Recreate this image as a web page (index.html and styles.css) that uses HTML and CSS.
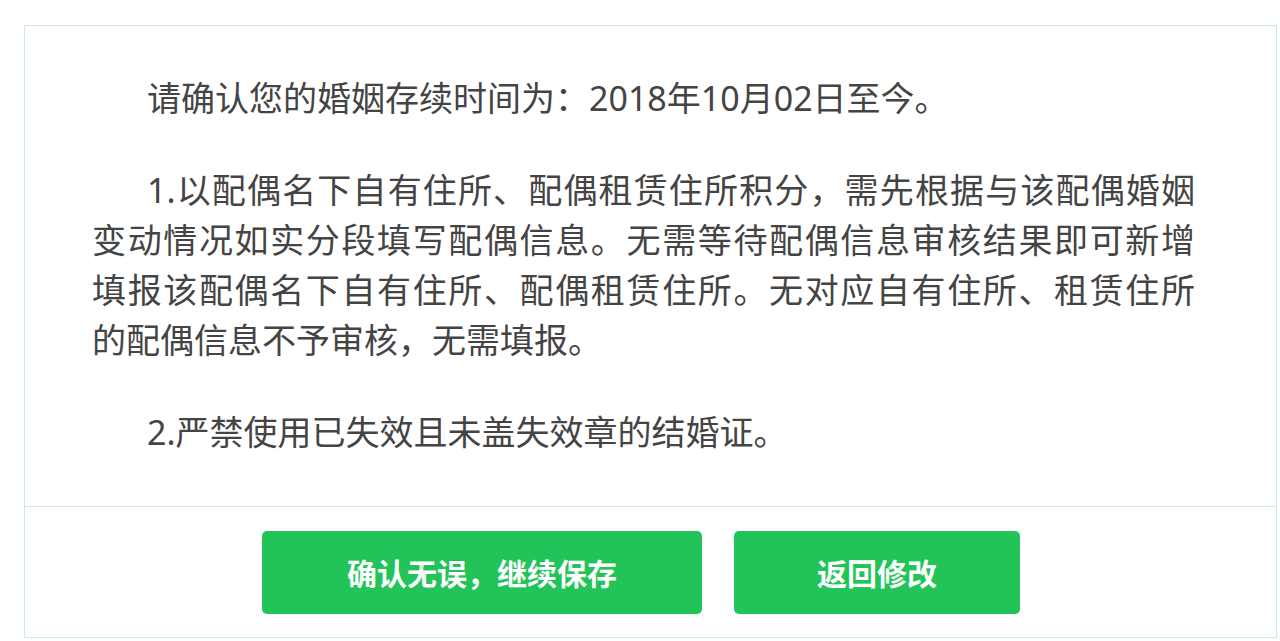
FILE: index.html
```html
<!DOCTYPE html>
<html>
<head lang="zh-CN">
    <meta charset="UTF-8">
    <title>婚姻存续时间确认</title>
    <meta name="viewport" content="width=device-width,user-scalable=no" />
    <link rel="stylesheet" href="styles.css">
</head>
<body>
<section class="confirm-box">
    <div class="confirm-body">
        <p class="para">请确认您的婚姻存续时间为：2018年10月02日至今。</p>
        <p class="para">
            <span class="ln full">1.以配偶名下自有住所、配偶租赁住所积分，需先根据与该配偶婚姻</span>
            <span class="ln full">变动情况如实分段填写配偶信息。无需等待配偶信息审核结果即可新增</span>
            <span class="ln full">填报该配偶名下自有住所、配偶租赁住所。无对应自有住所、租赁住所</span>
            <span class="ln">的配偶信息不予审核，无需填报。</span>
        </p>
        <p class="para">2.严禁使用已失效且未盖失效章的结婚证。</p>
    </div>
    <div class="confirm-foot">
        <a class="btn btn-ok" href="javascript:;">确认无误，继续保存</a>
        <a class="btn btn-back" href="javascript:;">返回修改</a>
    </div>
</section>
</body>
</html>
```

FILE: styles.css
```css
html, body{
    margin: 0;
    padding: 0;
    background: #fff;
    font-family: "Noto Sans", "Noto Sans CJK SC", sans-serif;
}

.confirm-box{
    margin: 25px 3px 0 24px;
    border: 1px solid #c9eed8;
    box-sizing: border-box;
    height: 613px;
    display: flex;
    flex-direction: column;
}

.confirm-body{
    padding: 47px 81px 0 67px;
    height: 480px;
    box-sizing: border-box;
    color: #444;
    font-size: 34px;
    line-height: 50px;
}

.para{
    margin: 0 0 42px;
    text-indent: 55px;
    text-align: justify;
}

.ln{
    display: block;
    text-indent: 0;
}

.ln:first-child{
    text-indent: 55px;
}

.ln.full{
    text-align-last: justify;
}

.confirm-foot{
    flex: 1;
    border-top: 1px solid #c9eed8;
    display: flex;
    justify-content: center;
    align-items: center;
    gap: 32px;
    padding-right: 19px;
}

.btn{
    display: flex;
    justify-content: center;
    align-items: center;
    height: 83px;
    border-radius: 5px;
    background: #22c45a;
    color: #fff;
    font-size: 30px;
    font-weight: bold;
    text-decoration: none;
    font-family: "Noto Sans CJK SC", sans-serif;
}

.btn-ok{
    width: 440px;
}

.btn-back{
    width: 286px;
}
```
